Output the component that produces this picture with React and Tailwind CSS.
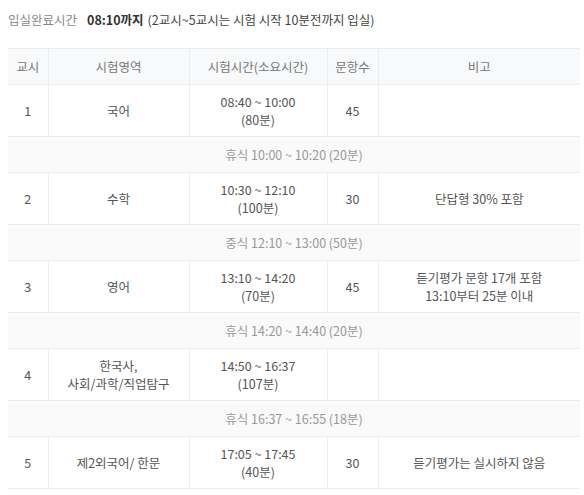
const font = { fontFamily: '"Noto Sans CJK KR", "Noto Sans", sans-serif' };

const rows = [
  { type: 'exam', no: '1', subject: ['국어'], time: '08:40 ~ 10:00', dur: '(80분)', count: '45', note: [] },
  { type: 'break', text: '휴식 10:00 ~ 10:20 (20분)' },
  { type: 'exam', no: '2', subject: ['수학'], time: '10:30 ~ 12:10', dur: '(100분)', count: '30', note: ['단답형 30% 포함'] },
  { type: 'break', text: '중식 12:10 ~ 13:00 (50분)' },
  { type: 'exam', no: '3', subject: ['영어'], time: '13:10 ~ 14:20', dur: '(70분)', count: '45', note: ['듣기평가 문항 17개 포함', '13:10부터 25분 이내'] },
  { type: 'break', text: '휴식 14:20 ~ 14:40 (20분)' },
  { type: 'exam', no: '4', subject: ['한국사,', '사회/과학/직업탐구'], time: '14:50 ~ 16:37', dur: '(107분)', count: '', note: [] },
  { type: 'break', text: '휴식 16:37 ~ 16:55 (18분)' },
  { type: 'exam', no: '5', subject: ['제2외국어/ 한문'], time: '17:05 ~ 17:45', dur: '(40분)', count: '30', note: ['듣기평가는 실시하지 않음'] },
];

const cell = 'border-l border-[#ececec] first:border-l-0 text-center align-middle';

export default function App() {
  return (
    <div className="w-[584px] h-[495px] bg-white text-[12.5px] text-[#555] overflow-hidden" style={font}>
      <div className="pl-[8px] pt-[11px] h-[48px] text-[12.5px]">
        <span className="text-[#888]">입실완료시간</span>
        <span className="ml-[10px] font-bold text-[#333]">08:10까지</span>
        <span className="ml-[4px] text-[#444]">(2교시~5교시는 시험 시작 10분전까지 입실)</span>
      </div>
      <table className="ml-[8px] w-[572px] border-collapse table-fixed leading-[18px]">
        <colgroup>
          <col className="w-[40px]" />
          <col className="w-[141px]" />
          <col className="w-[138px]" />
          <col className="w-[51px]" />
          <col />
        </colgroup>
        <thead>
          <tr className="h-[36px] bg-[#f8f9fa] border-y border-[#ececec] text-[#777]">
            {['교시', '시험영역', '시험시간(소요시간)', '문항수', '비고'].map((h) => (
              <th key={h} className={`${cell} font-normal`}>{h}</th>
            ))}
          </tr>
        </thead>
        <tbody>
          {rows.map((r, i) =>
            r.type === 'break' ? (
              <tr key={i} className="h-[36px] bg-[#fafafa] border-b border-[#ececec]">
                <td colSpan={5} className="text-center text-[#999]">{r.text}</td>
              </tr>
            ) : (
              <tr key={i} className="h-[52px] border-b border-[#ececec]">
                <td className={cell}>{r.no}</td>
                <td className={cell}>
                  {r.subject.map((s) => (
                    <div key={s}>{s}</div>
                  ))}
                </td>
                <td className={cell}>
                  <div>{r.time}</div>
                  <div>{r.dur}</div>
                </td>
                <td className={cell}>{r.count}</td>
                <td className={cell}>
                  {r.note.map((n) => (
                    <div key={n}>{n}</div>
                  ))}
                </td>
              </tr>
            )
          )}
        </tbody>
      </table>
    </div>
  );
}
